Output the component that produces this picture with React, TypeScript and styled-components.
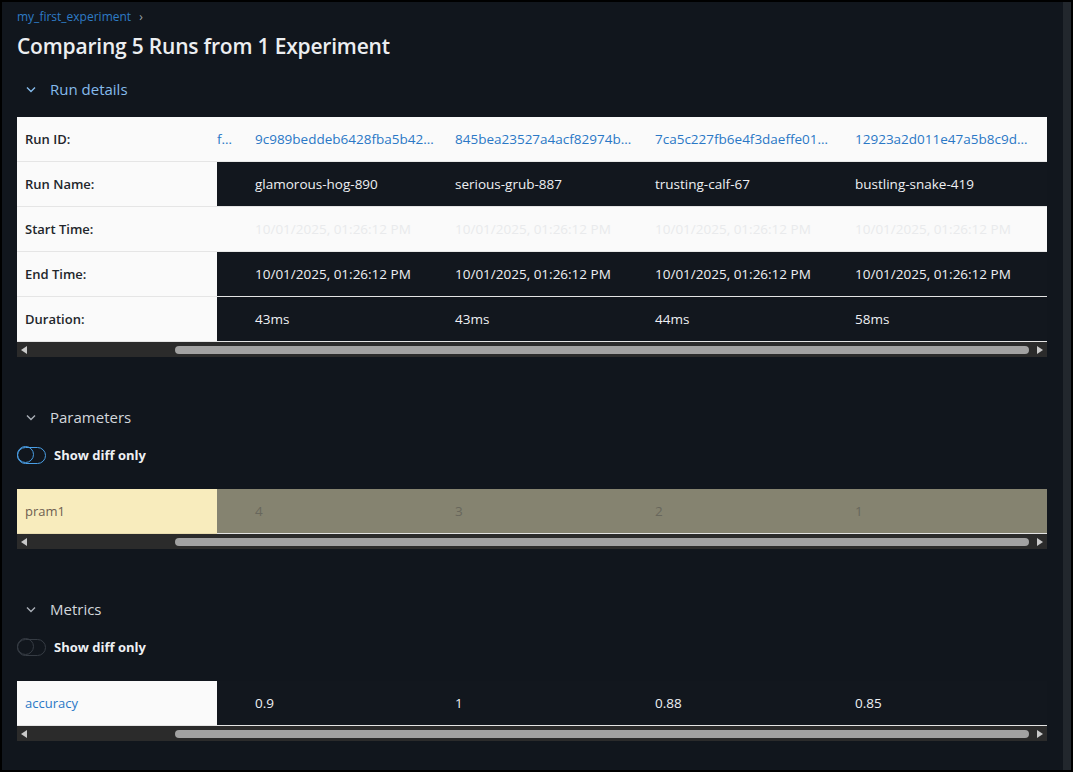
import React from "react";
import styled, { createGlobalStyle } from "styled-components";

const Global = createGlobalStyle`
  html, body { margin: 0; padding: 0; background: #000; }
  body { font-family: "Open Sans", "Noto Sans", sans-serif; }
  * { box-sizing: border-box; }
`;

const Frame = styled.div`
  width: 1073px;
  height: 772px;
  border: 2px solid #000;
  display: flex;
  background: #11161d;
  overflow: hidden;
`;

const Page = styled.main`
  flex: 1;
  padding: 6px 16px 0 15px;
  display: flex;
  flex-direction: column;
  min-width: 0;
`;

const VScroll = styled.div`
  width: 8px;
  background: #22272d;
`;

const Crumb = styled.div`
  font-size: 12px;
  line-height: 18px;
  color: #2e7bc6;
  display: flex;
  align-items: center;
  gap: 8px;
  span:last-child { color: #9aa3ad; font-size: 12px; }
`;

const Title = styled.h1`
  margin: 6px 0 0;
  font-size: 21px;
  line-height: 28px;
  font-weight: 600;
  color: #eceef1;
  letter-spacing: -0.2px;
`;

const SectionHeader = styled.div<{ $active?: boolean; $top: number }>`
  margin-top: ${(p) => p.$top}px;
  height: 32px;
  display: flex;
  align-items: center;
  gap: 14px;
  padding-left: 9px;
  font-size: 15px;
  color: ${(p) => (p.$active ? "#85bbec" : "#d3d7dc")};
  svg { flex: none; }
`;

const ToggleRow = styled.label`
  margin-top: 12px;
  height: 20px;
  display: flex;
  align-items: center;
  gap: 8px;
  font-size: 13px;
  font-weight: 700;
  color: #eef0f3;
`;

const Toggle = styled.span<{ $on?: boolean }>`
  position: relative;
  width: 29px;
  height: 17px;
  border-radius: 9px;
  border: 1.5px solid ${(p) => (p.$on ? "#4a9fe6" : "#363c44")};
  &::before {
    content: "";
    position: absolute;
    left: -1.5px;
    top: -1.5px;
    width: 17px;
    height: 17px;
    border-radius: 50%;
    box-sizing: border-box;
    border: 1.5px solid ${(p) => (p.$on ? "#4a9fe6" : "#363c44")};
  }
`;

const Table = styled.div<{ $top: number }>`
  margin-top: ${(p) => p.$top}px;
  width: 1030px;
  display: flex;
  flex-direction: column;
`;

const Row = styled.div`
  display: flex;
  height: 45px;
`;

type Tone = "light" | "dark" | "param";

const Label = styled.div<{ $tone: Tone; $link?: boolean; $bold?: boolean }>`
  width: 200px;
  flex: none;
  display: flex;
  align-items: center;
  padding-left: 8px;
  font-size: 13px;
  font-weight: ${(p) => (p.$bold ? 600 : 500)};
  background: ${(p) => (p.$tone === "param" ? "#f8ecbd" : "#fafafa")};
  color: ${(p) => (p.$link ? "#2a78c6" : p.$tone === "param" ? "#6f5f52" : "#22262b")};
  border-bottom: 1px solid ${(p) => (p.$tone === "param" ? "#e9ddb0" : "#e5e5e5")};
`;

const Cells = styled.div`
  flex: 1;
  display: flex;
  min-width: 0;
`;

const bg = (t: Tone) => (t === "light" ? "#fafafa" : t === "param" ? "#858370" : "#12171e");

const Cell = styled.div<{ $tone: Tone; $link?: boolean; $faint?: boolean; $partial?: boolean }>`
  width: ${(p) => (p.$partial ? "30px" : "200px")};
  flex: none;
  padding: ${(p) => (p.$partial ? "0" : "0 12px 0 8px")};
  font-size: 13.5px;
  white-space: nowrap;
  overflow: hidden;
  text-overflow: ellipsis;
  line-height: 44px;
  background: ${(p) => bg(p.$tone)};
  color: ${(p) =>
    p.$link ? "#2a78c6" : p.$faint ? "#e9eaec" : p.$tone === "param" ? "#68675c" : "#eef0f3"};
  border-bottom: 1px solid ${(p) => (p.$tone === "light" ? "#e8e8e8" : "#e4e4e4")};
`;

const HScroll = styled.div`
  height: 15px;
  background: #2b2b2b;
  display: flex;
  align-items: center;
  padding: 0 4px;
`;

const Arrow = styled.span<{ $dir: "l" | "r" }>`
  width: 0;
  height: 0;
  border-top: 4.5px solid transparent;
  border-bottom: 4.5px solid transparent;
  ${(p) => (p.$dir === "l" ? "border-right: 6px solid #c9c9c9;" : "border-left: 6px solid #c9c9c9;")}
`;

const Thumb = styled.span`
  height: 8px;
  border-radius: 4px;
  background: #a2a2a2;
  margin-left: 148px;
  margin-right: 8px;
  flex: 1;
`;

const Chevron = ({ color }: { color: string }) => (
  <svg width="10" height="7" viewBox="0 0 10 7">
    <path d="M1 1.5 L5 5.5 L9 1.5" fill="none" stroke={color} strokeWidth="1.4" />
  </svg>
);

const Scrollbar = () => (
  <HScroll>
    <Arrow $dir="l" />
    <Thumb />
    <Arrow $dir="r" />
  </HScroll>
);

type RowData = {
  label: string;
  tone: Tone;
  valueTone: Tone;
  tail?: string;
  values: string[];
  link?: boolean;
  labelLink?: boolean;
  faint?: boolean;
};

const DataTable = ({ rows, top, bold }: { rows: RowData[]; top: number; bold?: boolean }) => (
  <Table $top={top}>
    {rows.map((r) => (
      <Row key={r.label}>
        <Label $tone={r.tone} $link={r.labelLink} $bold={bold}>
          {r.label}
        </Label>
        <Cells>
          <Cell $partial $tone={r.valueTone} $link={r.link}>
            {r.tail ?? ""}
          </Cell>
          {r.values.map((v, i) => (
            <Cell key={i} $tone={r.valueTone} $link={r.link} $faint={r.faint}>
              {v}
            </Cell>
          ))}
        </Cells>
      </Row>
    ))}
    <Scrollbar />
  </Table>
);

const time = "10/01/2025, 01:26:12 PM";

const runRows: RowData[] = [
  {
    label: "Run ID:",
    tone: "light",
    valueTone: "light",
    link: true,
    tail: "f…",
    values: [
      "9c989beddeb6428fba5b42e1d7c03a9f",
      "845bea23527a4acf82974b6e0d1f2c3a",
      "7ca5c227fb6e4f3daeffe0117b2c9d8e",
      "12923a2d011e47a5b8c9d4f1e2a3b6c7",
    ],
  },
  {
    label: "Run Name:",
    tone: "light",
    valueTone: "dark",
    values: ["glamorous-hog-890", "serious-grub-887", "trusting-calf-67", "bustling-snake-419"],
  },
  {
    label: "Start Time:",
    tone: "light",
    valueTone: "light",
    faint: true,
    values: [time, time, time, time],
  },
  {
    label: "End Time:",
    tone: "light",
    valueTone: "dark",
    values: [time, time, time, time],
  },
  {
    label: "Duration:",
    tone: "light",
    valueTone: "dark",
    values: ["43ms", "43ms", "44ms", "58ms"],
  },
];

const paramRows: RowData[] = [
  { label: "pram1", tone: "param", valueTone: "param", values: ["4", "3", "2", "1"] },
];

const metricRows: RowData[] = [
  { label: "accuracy", tone: "light", valueTone: "dark", labelLink: true, values: ["0.9", "1", "0.88", "0.85"] },
];

export default function App() {
  return (
    <>
      <Global />
      <Frame>
        <Page>
          <Crumb>
            <span>my_first_experiment</span>
            <span>›</span>
          </Crumb>
          <Title>Comparing 5 Runs from 1 Experiment</Title>

          <SectionHeader $active $top={13}>
            <Chevron color="#85bbec" />
            Run details
          </SectionHeader>
          <DataTable rows={runRows} top={12} bold />

          <SectionHeader $top={44}>
            <Chevron color="#a9afb7" />
            Parameters
          </SectionHeader>
          <ToggleRow>
            <Toggle $on />
            Show diff only
          </ToggleRow>
          <DataTable rows={paramRows} top={24} />

          <SectionHeader $top={44}>
            <Chevron color="#a9afb7" />
            Metrics
          </SectionHeader>
          <ToggleRow>
            <Toggle />
            Show diff only
          </ToggleRow>
          <DataTable rows={metricRows} top={24} />
        </Page>
        <VScroll />
      </Frame>
    </>
  );
}
